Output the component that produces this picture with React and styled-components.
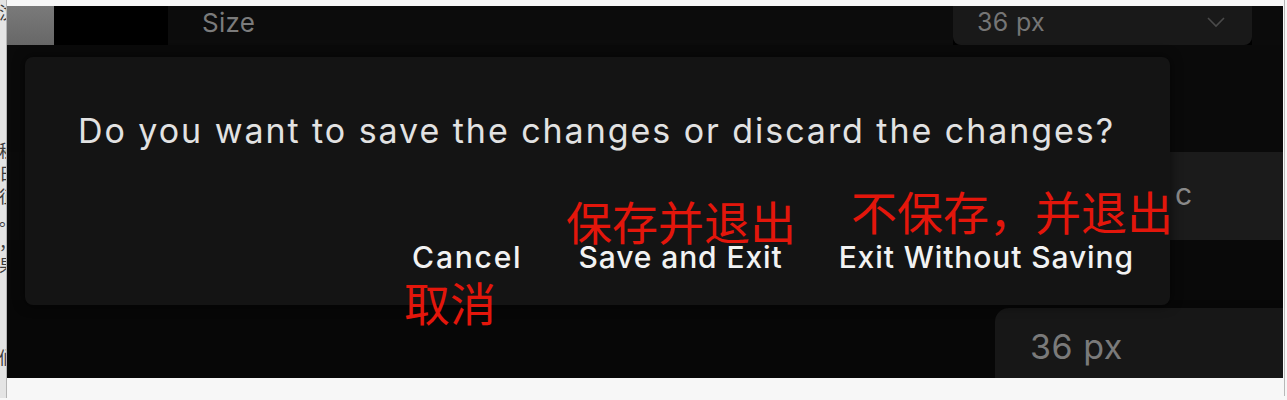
import styled, { createGlobalStyle } from "styled-components";

const GlobalStyle = createGlobalStyle`
  html, body {
    margin: 0;
    padding: 0;
    background: #f7f7f7;
  }
  body {
    font-family: Inter, "Noto Sans", sans-serif;
  }
`;

const sideLines = ["汶", "", "", "c", "e", "", "秘", "日", "征", "。", "，", "果", "", "", "", "们"];

const App = () => {
  return (
    <Page>
      <GlobalStyle />
      <LeftStrip>
        {sideLines.map((ch, i) => (
          <SideLine key={i} $accent={ch === "c" || ch === "e"}>
            {ch}
          </SideLine>
        ))}
      </LeftStrip>
      <Main>
        <Screen>
          <TopRow>
            <Swatch />
            <Gap />
            <SizeField>Size</SizeField>
            <Dropdown>
              <span>36 px</span>
              <svg width="20" height="12" viewBox="0 0 20 12">
                <path d="M2 2 L10 10 L18 2" fill="none" stroke="#4a4a4a" strokeWidth="1.6" />
              </svg>
            </Dropdown>
            <TopRest />
          </TopRow>
          <Band $h={107} $bg="#0a0a0a" />
          <Band $h={88} $bg="#0b0b0b">
            <SidePanel>c</SidePanel>
          </Band>
          <Band $h={60} $bg="#090909" />
          <Band $h={78} $bg="#070707">
            <ValueField>36 px</ValueField>
          </Band>

          <Dialog>
            <Question>Do you want to save the changes or discard the changes?</Question>
            <Actions>
              <ActionButton $wide>Cancel</ActionButton>
              <ActionButton>Save and Exit</ActionButton>
              <ActionButton>Exit Without Saving</ActionButton>
            </Actions>
          </Dialog>

          <Note $x={559} $y={191}>保存并退出</Note>
          <Note $x={844} $y={181}>不保存，并退出</Note>
          <Note $x={397} $y={272}>取消</Note>
        </Screen>
      </Main>
      <RightEdge />
    </Page>
  );
};

const Page = styled.div`
  width: 1287px;
  height: 400px;
  display: flex;
  background: #f7f7f7;
  overflow: hidden;
`;

const LeftStrip = styled.div`
  width: 6px;
  height: 398px;
  background: #e4e4e4;
  border-right: 1px solid #b4b4b4;
  display: flex;
  flex-direction: column;
  align-items: flex-end;
  overflow: hidden;
`;

const SideLine = styled.div`
  height: 23px;
  line-height: 23px;
  font-size: 17px;
  font-family: "Noto Sans CJK SC", sans-serif;
  color: ${(p) => (p.$accent ? "#c8773a" : "#3a3a3a")};
  white-space: nowrap;
  margin-right: -10px;
`;

const Main = styled.div`
  width: 1276px;
  padding-top: 6px;
`;

const Screen = styled.div`
  position: relative;
  height: 372px;
  background: #0a0a0a;
  display: flex;
  flex-direction: column;
  overflow: hidden;
`;

const TopRow = styled.div`
  height: 39px;
  display: flex;
  background: #000;
`;

const Swatch = styled.div`
  width: 47px;
  background: linear-gradient(#7a7a7a, #676767);
`;

const Gap = styled.div`
  width: 114px;
  background: #000;
`;

const SizeField = styled.div`
  width: 785px;
  box-sizing: border-box;
  padding: 0 0 7px 34px;
  display: flex;
  align-items: center;
  background: #0c0c0c;
  color: #7b7b7b;
  font-size: 26px;
  letter-spacing: 0.3px;
`;

const Dropdown = styled.div`
  width: 299px;
  box-sizing: border-box;
  padding: 0 26px 7px 24px;
  display: flex;
  align-items: center;
  justify-content: space-between;
  background: #191919;
  border-radius: 0 0 8px 8px;
  color: #757575;
  font-size: 25px;
  letter-spacing: 0.3px;
`;

const TopRest = styled.div`
  flex: 1;
  background: #0b0b0b;
`;

const Band = styled.div`
  height: ${(p) => p.$h}px;
  background: ${(p) => p.$bg};
  display: flex;
  justify-content: flex-end;
  align-items: flex-end;
`;

const SidePanel = styled.div`
  width: 113px;
  height: 100%;
  box-sizing: border-box;
  padding: 0 0 4px 5px;
  display: flex;
  align-items: center;
  background: #1b1b1b;
  color: #8a8a8a;
  font-size: 30px;
`;

const ValueField = styled.div`
  width: 288px;
  height: 70px;
  box-sizing: border-box;
  padding: 6px 0 0 35px;
  display: flex;
  align-items: center;
  background: #171717;
  border-top-left-radius: 14px;
  color: #7a7a7a;
  font-size: 34px;
  letter-spacing: 0.5px;
`;

const Dialog = styled.div`
  position: absolute;
  left: 18px;
  top: 51px;
  width: 1145px;
  height: 248px;
  box-sizing: border-box;
  padding: 54px 36px 0 53px;
  background: #141414;
  border-radius: 8px;
  box-shadow: 0 0 12px rgba(0, 0, 0, 0.6);
  display: flex;
  flex-direction: column;
`;

const Question = styled.div`
  height: 40px;
  line-height: 40px;
  font-size: 34px;
  letter-spacing: 1.95px;
  color: #e2e2e2;
  white-space: nowrap;
`;

const Actions = styled.div`
  margin-top: 86px;
  display: flex;
  justify-content: flex-end;
  gap: 56px;
`;

const ActionButton = styled.div`
  height: 40px;
  line-height: 40px;
  font-size: 30px;
  font-weight: 500;
  letter-spacing: ${(p) => (p.$wide ? "1.8px" : "0.9px")};
  color: #f2f2f2;
  white-space: nowrap;
  cursor: pointer;
`;

const Note = styled.div`
  position: absolute;
  left: ${(p) => p.$x}px;
  top: ${(p) => p.$y}px;
  font-family: "Noto Sans CJK SC", sans-serif;
  font-size: 46px;
  line-height: 1;
  color: #e3160b;
  white-space: nowrap;
`;

const RightEdge = styled.div`
  width: 2px;
  height: 396px;
  margin-left: 1px;
  border-left: 1px solid #b8b8b8;
`;

export default App;
